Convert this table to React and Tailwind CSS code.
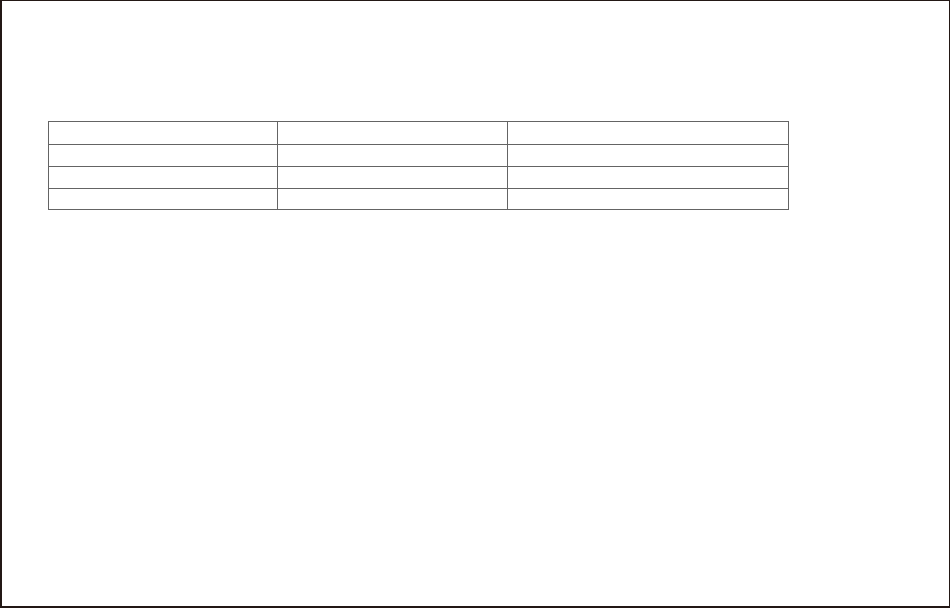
import React from "react";

// empty 4x3 grid inside a framed page
const cols = ["w-[229px]", "w-[230px]", "w-[281px]"];
const rows = ["h-[23px]", "h-[22px]", "h-[22px]", "h-[21px]"];

export default function App() {
  return (
    <main className="w-[950px] h-[608px] bg-white border-t border-r border-l-2 border-b-2 border-[#231815] font-['Liberation_Sans',sans-serif]">
      <div className="pt-[120px] pl-[46px]">
        <div className="inline-flex flex-col border-l border-t border-[#646464]">
          {rows.map((h, r) => (
            <div key={r} className="flex">
              {cols.map((w, c) => (
                <div key={c} className={`${w} ${h} border-r border-b border-[#646464]`} />
              ))}
            </div>
          ))}
        </div>
      </div>
    </main>
  );
}
